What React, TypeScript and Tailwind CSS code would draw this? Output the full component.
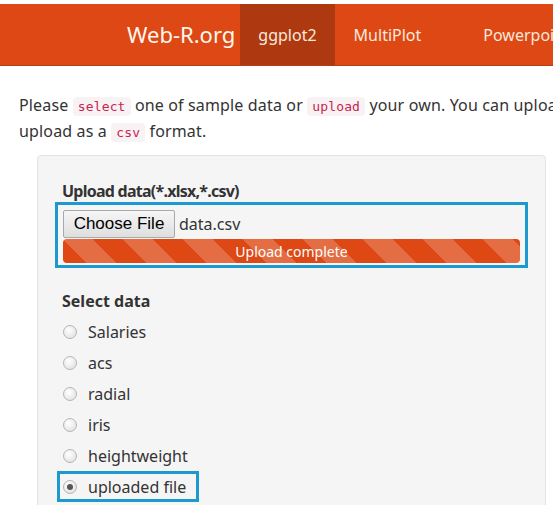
import React from 'react';

const font = { fontFamily: '"Noto Sans", "Open Sans", Arial, sans-serif' };

function Code({ children }: { children: React.ReactNode }) {
    return (
        <code className="rounded-[4px] bg-[#f9f2f4] px-[5px] py-[2px] text-[13px] text-[#c7254e] [font-family:'DejaVu_Sans_Mono',monospace]">
            {children}
        </code>
    );
}

function Radio({ label, checked }: { label: string; checked?: boolean }) {
    return (
        <div className="flex h-[31px] items-center">
            <span className="flex h-[14px] w-[14px] items-center justify-center rounded-full border border-[#b5b5b5] bg-[radial-gradient(circle_at_40%_35%,#ffffff,#dcdcdc)]">
                {checked && <span className="h-[6px] w-[6px] rounded-full bg-[#555]" />}
            </span>
            <span className="ml-[11px] text-[16px] text-[#333]">{label}</span>
        </div>
    );
}

export default function App() {
    const items = ['Salaries', 'acs', 'radial', 'iris', 'heightweight'];
    return (
        <div className="h-[505px] w-[553px] overflow-hidden bg-white pt-[4px]" style={font}>
            <div className="flex h-[62px] items-stretch overflow-hidden border-b border-[#b23e14] bg-[#dd4814] text-white">
                <div className="ml-[127px] flex shrink-0 items-center whitespace-nowrap text-[22px] text-[#fff6ee]">Web-R.org</div>
                <div className="ml-[5px] flex shrink-0 items-center bg-[#ae3910] px-[18px] text-[16px] text-[#fbe9dd]">ggplot2</div>
                <div className="flex shrink-0 items-center pr-[62px] pl-[19px] text-[16px] text-[#fbe9dd]">MultiPlot</div>
                <div className="flex shrink-0 items-center whitespace-nowrap text-[16px] text-[#fbe9dd]">Powerpoint</div>
            </div>

            <p className="mt-[27px] ml-[19px] w-[560px] text-[16px] leading-[24px] tracking-[0.15px] text-[#333]">
                Please <Code>select</Code> one of sample data or <Code>upload</Code> your own. You can upload
                <br />
                upload as a <Code>csv</Code> format.
            </p>

            <div className="mt-[10px] ml-[37px] w-[509px] rounded-[4px] border border-[#e3e3e3] bg-[#f5f5f5] pt-[24px] pl-[17px] pb-[20px]">
                <div className="ml-[7px] text-[16px] font-bold leading-[22px] tracking-[-0.75px] text-[#333]">Upload data(*.xlsx,*.csv)</div>
                <div className="w-[473px] border-[3px] border-[#1c9ad0] px-[5px] pt-[5px] pb-[2px]">
                    <div className="flex items-center">
                        <span className="flex h-[28px] w-[112px] items-center justify-center rounded-[2px] border border-[#a9a9a9] bg-[linear-gradient(#f6f6f6,#dedede)] text-[17px] text-black [font-family:Arial,'Liberation_Sans',sans-serif]">
                            Choose File
                        </span>
                        <span className="ml-[4px] text-[16px] text-[#333]">data.csv</span>
                    </div>
                    <div className="mt-[1px] flex h-[24px] items-center justify-center rounded-[4px] bg-[#dd4814] bg-[linear-gradient(45deg,rgba(255,255,255,0.2)_25%,transparent_25%,transparent_50%,rgba(255,255,255,0.2)_50%,rgba(255,255,255,0.2)_75%,transparent_75%,transparent)] bg-[length:60px_60px] text-[14px] text-white">
                        Upload complete
                    </div>
                </div>

                <div className="mt-[22px] ml-[7px] text-[16px] font-bold leading-[22px] text-[#333]">Select data</div>
                <div className="mt-[4px] ml-[8px]">
                    {items.map((it) => (
                        <Radio key={it} label={it} />
                    ))}
                </div>
                <div className="ml-[2px] w-[142px] border-[3px] border-[#1c9ad0] pl-[3px]">
                    <div className="-my-[3px]">
                        <Radio label="uploaded file" checked />
                    </div>
                </div>
            </div>
        </div>
    );
}
